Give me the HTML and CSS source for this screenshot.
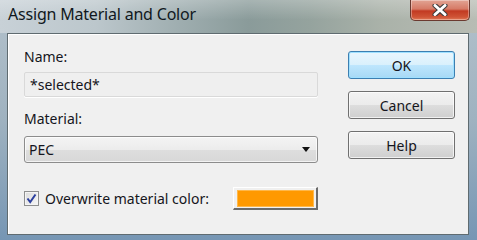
FILE: index.html
```html
<!DOCTYPE html>
<html lang="en">
<head>
  <meta charset="UTF-8">
  <title>Assign Material and Color</title>
  <link rel="stylesheet" href="styles.css">
</head>
<body>
  <div class="window">
    <div class="titlebar">
      <span class="title">Assign Material and Color</span>
      <div class="close-btn">
        <svg width="16" height="12" viewBox="0 0 16 12">
          <path d="M3 1.5 L13 10.5 M13 1.5 L3 10.5" stroke="#3a3a3a" stroke-width="5" stroke-linecap="round"/>
          <path d="M3 1.5 L13 10.5 M13 1.5 L3 10.5" stroke="#ffffff" stroke-width="3" stroke-linecap="round"/>
        </svg>
      </div>
    </div>

    <div class="client">
      <div class="form">
        <div class="label">Name:</div>
        <div class="text-field">*selected*</div>

        <div class="label label-material">Material:</div>
        <div class="select">
          <span>PEC</span>
          <span class="arrow"></span>
        </div>

        <div class="color-row">
          <span class="checkbox">
            <svg width="13" height="13" viewBox="0 0 13 13">
              <path d="M2.5 6.5 L5.2 10 L10.5 2.5" fill="none" stroke="#2b3f9e" stroke-width="2"/>
            </svg>
          </span>
          <span class="check-label">Overwrite material color:</span>
          <div class="color-btn"><div class="swatch"></div></div>
        </div>
      </div>

      <div class="buttons">
        <div class="btn btn-default">OK</div>
        <div class="btn">Cancel</div>
        <div class="btn">Help</div>
      </div>
    </div>
  </div>
</body>
</html>
```

FILE: styles.css
```css
* {
  box-sizing: border-box;
}

body {
  margin: 0;
  font-family: "Noto Sans", "Open Sans", sans-serif;
  color: #151520;
}

.window {
  width: 477px;
  height: 240px;
  padding: 0 8px 5px 7px;
  display: flex;
  flex-direction: column;
  background: linear-gradient(to bottom, #b3c1cb 0%, #9fb2c0 50%, #7696b4 100%);
}

.titlebar {
  height: 33px;
  margin: 0 -8px 0 -7px;
  padding: 0 7px 0 8px;
  display: flex;
  justify-content: space-between;
  align-items: flex-start;
  background:
    linear-gradient(to bottom, rgba(255,255,255,0.25), rgba(255,255,255,0) 60%),
    linear-gradient(to right, #c8d1d7 0%, #bcc7cc 20%, #9eadaf 38%, #8a9b9a 52%, #95a39e 65%, #aab2a9 80%, #b8bcb4 100%);
}

.title {
  font-size: 16px;
  line-height: 20px;
  padding-top: 4px;
  color: #101820;
  letter-spacing: -0.2px;
}

.close-btn {
  width: 60px;
  height: 21px;
  border: 1px solid #6b3a30;
  border-top: none;
  border-radius: 0 0 5px 5px;
  display: flex;
  align-items: center;
  justify-content: center;
  background: linear-gradient(to bottom, #e2a494 0%, #d67a66 45%, #c23a22 55%, #cf5436 85%, #e07a58 100%);
  box-shadow: inset 0 0 0 1px rgba(255,255,255,0.35);
}

.client {
  flex: 1;
  display: flex;
  background: #f0f0f0;
  border: 1px solid #5f6b70;
  box-shadow: inset 1px 1px 0 #ffffff;
  padding: 14px 13px 0 16px;
}

.form {
  width: 294px;
  display: flex;
  flex-direction: column;
}

.label {
  font-size: 14px;
  line-height: 18px;
}

.label-material {
  margin-top: 13px;
}

.text-field {
  margin-top: 6px;
  height: 25px;
  border: 1px solid #d9d9d9;
  border-radius: 2px;
  background: #efefef;
  box-shadow: 0 1px 0 #ffffff;
  font-size: 14px;
  line-height: 23px;
  padding-left: 5px;
}

.select {
  margin-top: 8px;
  height: 27px;
  border: 1px solid #8c8c8c;
  border-radius: 3px;
  background: linear-gradient(to bottom, #f4f4f4 0%, #ececec 50%, #dedede 51%, #d8d8d8 100%);
  box-shadow: inset 0 0 0 1px rgba(255,255,255,0.7);
  display: flex;
  align-items: center;
  justify-content: space-between;
  padding: 0 7px 0 4px;
  font-size: 14px;
}

.arrow {
  width: 0;
  height: 0;
  border-left: 4px solid transparent;
  border-right: 4px solid transparent;
  border-top: 5px solid #111;
}

.color-row {
  margin-top: 24px;
  height: 23px;
  display: flex;
  align-items: center;
}

.checkbox {
  width: 15px;
  height: 15px;
  border: 1px solid #8e8f8f;
  background: linear-gradient(to bottom right, #dcdcdc, #f6f6f6);
  box-shadow: inset 0 0 0 1px #f4f4f4;
  display: flex;
  align-items: center;
  justify-content: center;
}

.check-label {
  margin-left: 6px;
  font-size: 14px;
  flex: 1;
}

.color-btn {
  width: 85px;
  height: 23px;
  border-top: 1px solid #ffffff;
  border-left: 1px solid #ffffff;
  border-right: 2px solid #6a6a6a;
  border-bottom: 2px solid #6a6a6a;
  background: #f0f0f0;
  padding: 2px 2px 1px 3px;
}

.swatch {
  height: 100%;
  background: #ff9900;
  border: 1px solid #ffb84a;
}

.buttons {
  margin-left: auto;
  padding-top: 3px;
  width: 107px;
  display: flex;
  flex-direction: column;
  gap: 12px;
}

.btn {
  height: 28px;
  border: 1px solid #707070;
  border-radius: 3px;
  background: linear-gradient(to bottom, #f3f3f3 0%, #ebebeb 50%, #dddddd 51%, #cfcfcf 100%);
  box-shadow: inset 0 0 0 1px rgba(255,255,255,0.7);
  font-size: 14px;
  display: flex;
  align-items: center;
  justify-content: center;
}

.btn-default {
  border-color: #3c7fb1;
  background: linear-gradient(to bottom, #eaf6fd 0%, #d9f0fc 50%, #bee6fd 51%, #a7d9f5 100%);
  box-shadow: inset 0 0 0 1px #9fe0ff;
}
```
